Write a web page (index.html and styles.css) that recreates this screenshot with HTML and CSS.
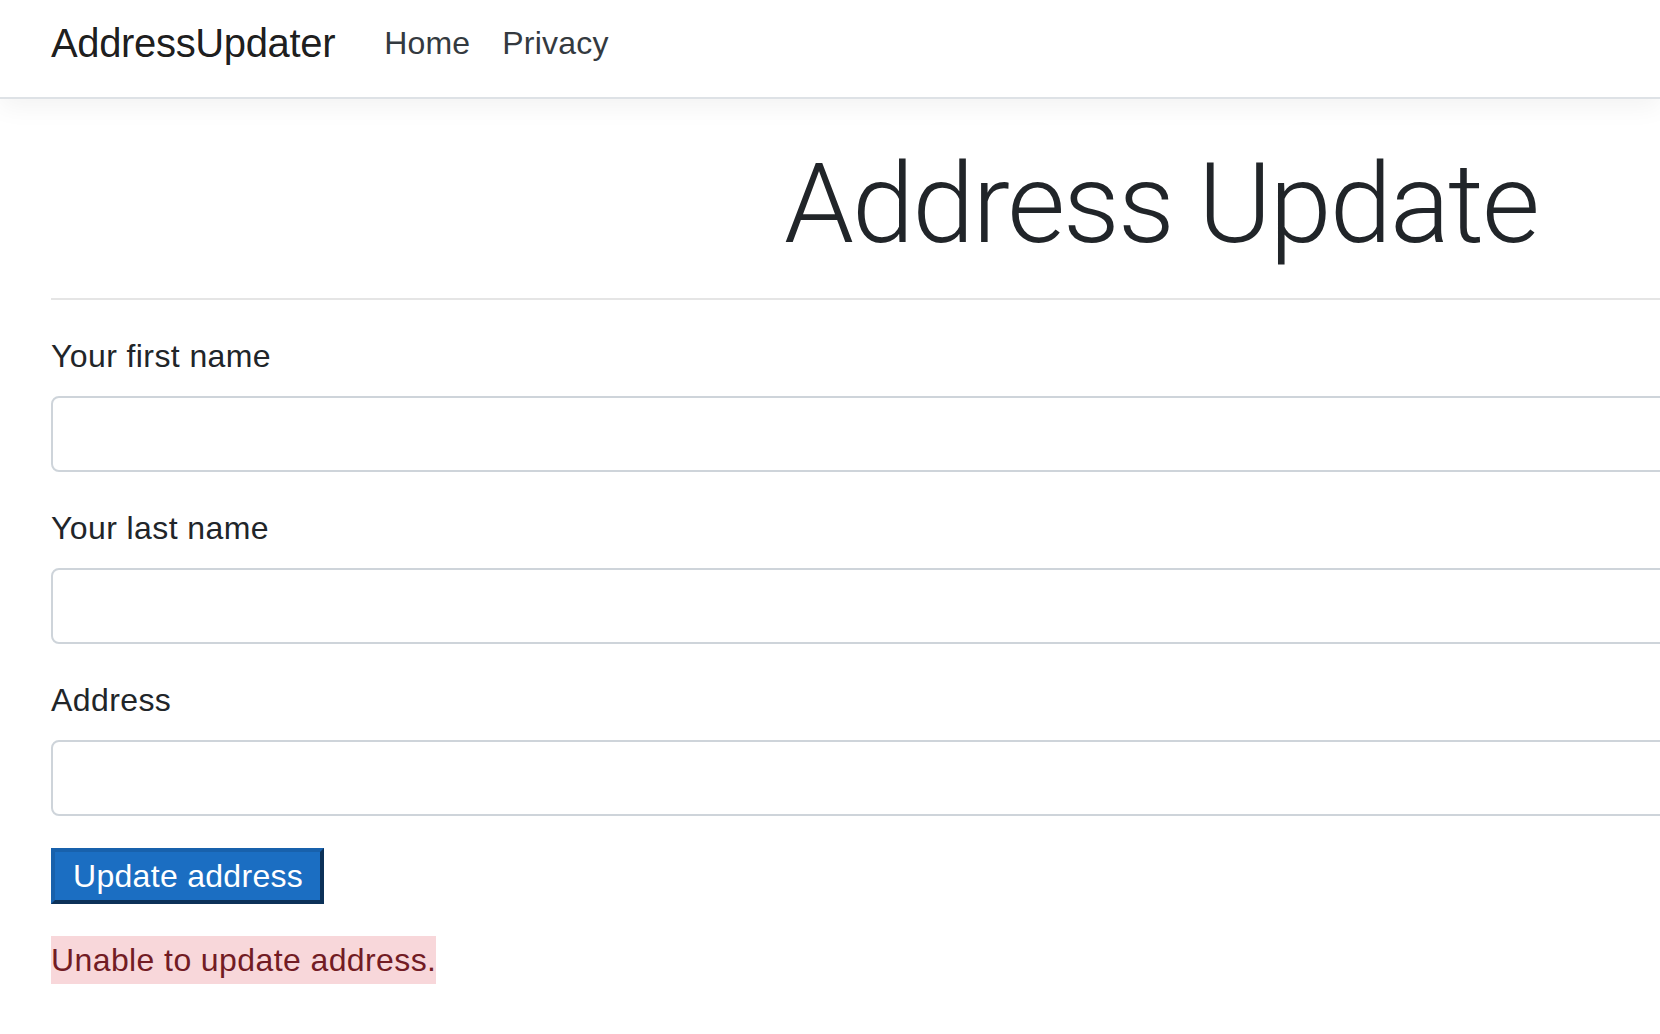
FILE: index.html
```html
<!DOCTYPE html>
<html lang="en">
<head>
<meta charset="utf-8">
<title>Address Update - AddressUpdater</title>
<link rel="stylesheet" href="styles.css">
</head>
<body>
<header class="site-header">
  <nav class="navbar">
    <a class="brand" href="#">AddressUpdater</a>
    <ul class="nav-links">
      <li><a class="nav-link" href="#">Home</a></li>
      <li><a class="nav-link" href="#">Privacy</a></li>
    </ul>
  </nav>
</header>
<main class="page">
  <h1 class="display-title">Address Update</h1>
  <hr class="divider">
  <form class="address-form">
    <div class="form-group">
      <label class="form-label" for="first">Your first name</label>
      <input class="form-control" id="first" type="text">
    </div>
    <div class="form-group">
      <label class="form-label" for="last">Your last name</label>
      <input class="form-control" id="last" type="text">
    </div>
    <div class="form-group">
      <label class="form-label" for="addr">Address</label>
      <input class="form-control" id="addr" type="text">
    </div>
    <button class="submit-btn" type="button">Update address</button>
    <div class="error-msg">Unable to update address.</div>
  </form>
</main>
</body>
</html>
```

FILE: styles.css
```css
html, body {
  margin: 0;
  padding: 0;
  overflow: hidden;
  background: #fff;
}
body {
  font-family: "Liberation Sans", Arial, sans-serif;
  font-size: 32px;
  line-height: 48px;
  color: #212529;
  letter-spacing: 0.4px;
}

.site-header {
  margin-bottom: 32px;
}
.navbar {
  display: flex;
  align-items: center;
  box-sizing: border-box;
  height: 99px;
  padding: 13px 0 24px 51px;
  background: #fff;
  border-bottom: 2px solid #dee2e6;
  box-shadow: 0 8px 24px rgba(0, 0, 0, 0.05);
}
.brand {
  font-size: 40px;
  line-height: 60px;
  letter-spacing: -0.35px;
  color: rgba(0, 0, 0, 0.9);
  text-decoration: none;
  margin-right: 33px;
}
.nav-links {
  display: flex;
  list-style: none;
  margin: 0;
  padding: 0;
}
.nav-link {
  display: block;
  padding: 0 16px;
  color: #343a40;
  text-decoration: none;
  line-height: 48px;
  letter-spacing: 0.2px;
}

.page {
  margin-left: 51px;
  width: 2220px;
}
.display-title {
  margin: 0;
  padding-top: 10px;
  font-family: Roboto, "Liberation Sans", sans-serif;
  font-weight: 300;
  font-size: 112px;
  line-height: 125px;
  letter-spacing: -2px;
  text-align: center;
  color: #212529;
}
.divider {
  margin: 32px 0;
  border: 0;
  border-top: 2px solid rgba(0, 0, 0, 0.1);
  height: 0;
}

.address-form {
  display: flex;
  flex-direction: column;
  align-items: flex-start;
}
.form-group {
  align-self: stretch;
  margin-bottom: 32px;
}
.form-label {
  display: block;
  margin-bottom: 16px;
}
.form-control {
  display: block;
  box-sizing: border-box;
  width: 100%;
  height: 76px;
  margin: 0;
  padding: 12px 24px;
  font: inherit;
  color: #495057;
  background: #fff;
  border: 2px solid #ced4da;
  border-radius: 8px;
}
.submit-btn {
  margin: 0;
  padding: 0 17px 0 18px;
  font: inherit;
  letter-spacing: 0.3px;
  line-height: 48px;
  color: #fff;
  background: #1b6ec2;
  border: 4px outset #1861ac;
  border-radius: 0;
}
.error-msg {
  margin-top: 32px;
  background: #f8d7da;
  color: #721c24;
  line-height: 48px;
  letter-spacing: 0.4px;
}
```
